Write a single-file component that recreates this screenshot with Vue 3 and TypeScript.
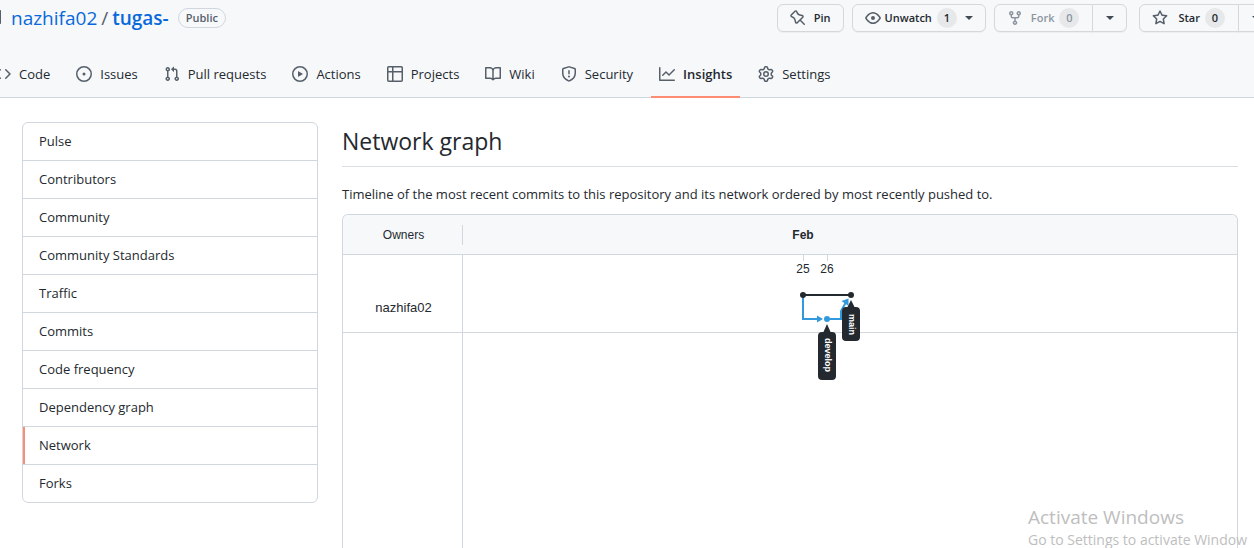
<script setup lang="ts">
interface Tab {
  label: string
  icon: string
  current?: boolean
}

const tabs: Tab[] = [
  { label: 'Code', icon: 'M4.72 3.22a.75.75 0 011.06 1.06L2.06 8l3.72 3.72a.75.75 0 11-1.06 1.06L.47 8.53a.75.75 0 010-1.06l4.25-4.25zm6.56 0a.75.75 0 10-1.06 1.06L13.94 8l-3.72 3.72a.75.75 0 101.06 1.06l4.25-4.25a.75.75 0 000-1.06l-4.25-4.25z' },
  { label: 'Issues', icon: 'M8 9.5a1.5 1.5 0 100-3 1.5 1.5 0 000 3zM8 0a8 8 0 100 16A8 8 0 008 0zM1.5 8a6.5 6.5 0 1113 0 6.5 6.5 0 01-13 0z' },
  { label: 'Pull requests', icon: 'M7.177 3.073L9.573.677A.25.25 0 0110 .854v4.792a.25.25 0 01-.427.177L7.177 3.427a.25.25 0 010-.354zM3.75 2.5a.75.75 0 100 1.5.75.75 0 000-1.5zm-2.25.75a2.25 2.25 0 113 2.122v5.256a2.251 2.251 0 11-1.5 0V5.372A2.25 2.25 0 011.5 3.25zM11 2.5h-1V4h1a1 1 0 011 1v5.628a2.251 2.251 0 101.5 0V5A2.5 2.5 0 0011 2.5zm1 10.25a.75.75 0 111.5 0 .75.75 0 01-1.5 0zM3.75 12a.75.75 0 100 1.5.75.75 0 000-1.5z' },
  { label: 'Actions', icon: 'M1.5 8a6.5 6.5 0 1113 0 6.5 6.5 0 01-13 0zM8 0a8 8 0 100 16A8 8 0 008 0zM6.379 5.227A.25.25 0 006 5.442v5.117a.25.25 0 00.379.214l4.264-2.559a.25.25 0 000-.428L6.379 5.227z' },
  { label: 'Projects', icon: 'M0 1.75C0 .784.784 0 1.75 0h12.5C15.216 0 16 .784 16 1.75v12.5A1.75 1.75 0 0114.25 16H1.75A1.75 1.75 0 010 14.25V1.75zM1.5 6.5v7.75c0 .138.112.25.25.25H5v-8H1.5zM5 5V1.5H1.75a.25.25 0 00-.25.25V5H5zm1.5 1.5v8h7.75a.25.25 0 00.25-.25V6.5h-8zm8-1.5V1.75a.25.25 0 00-.25-.25H6.5V5h8z' },
  { label: 'Wiki', icon: 'M0 1.75A.75.75 0 01.75 1h4.253c1.227 0 2.317.59 3 1.501A3.744 3.744 0 0111.006 1h4.245a.75.75 0 01.75.75v10.5a.75.75 0 01-.75.75h-4.507a2.25 2.25 0 00-1.591.659l-.622.621a.75.75 0 01-1.06 0l-.622-.621A2.25 2.25 0 005.258 13H.75a.75.75 0 01-.75-.75V1.75zm8.755 3a2.25 2.25 0 012.25-2.25H14.5v9h-3.757c-.71 0-1.4.201-1.992.572l.004-7.322zm-1.504 7.324l.004-5.073-.002-2.253A2.25 2.25 0 005.003 2.5H1.5v9h3.757a3.75 3.75 0 011.994.574z' },
  { label: 'Security', icon: 'M7.467.133a1.75 1.75 0 011.066 0l5.25 1.68A1.75 1.75 0 0115 3.48V7c0 1.566-.32 3.182-1.303 4.682-.983 1.498-2.585 2.813-5.032 3.855a1.7 1.7 0 01-1.33 0c-2.447-1.042-4.049-2.357-5.032-3.855C1.32 10.182 1 8.566 1 7V3.48a1.75 1.75 0 011.217-1.667l5.25-1.68zm.61 1.429a.25.25 0 00-.153 0l-5.25 1.68a.25.25 0 00-.174.238V7c0 1.358.275 2.666 1.057 3.86.784 1.194 2.121 2.34 4.366 3.297a.2.2 0 00.154 0c2.245-.956 3.582-2.104 4.366-3.298C13.225 9.666 13.5 8.36 13.5 7V3.48a.25.25 0 00-.174-.237l-5.25-1.68zM9 10.5a1 1 0 11-2 0 1 1 0 012 0zm-.25-5.75a.75.75 0 10-1.5 0v3a.75.75 0 001.5 0v-3z' },
  { label: 'Insights', current: true, icon: 'M1.5 1.75a.75.75 0 00-1.5 0v12.5c0 .414.336.75.75.75h14.5a.75.75 0 000-1.5H1.5V1.75zm14.28 2.53a.75.75 0 00-1.06-1.06L10 7.94 7.53 5.47a.75.75 0 00-1.06 0L3.22 8.72a.75.75 0 001.06 1.06L7 7.06l2.47 2.47a.75.75 0 001.06 0l5.25-5.25z' },
  { label: 'Settings', icon: 'M7.429 1.525a6.593 6.593 0 011.142 0c.036.003.108.036.137.146l.289 1.105c.147.56.55.967.997 1.189.174.086.341.183.501.29.417.278.97.423 1.53.27l1.102-.303c.11-.03.175.016.195.046.219.31.41.641.573.989.014.031.022.11-.059.19l-.815.806c-.411.406-.562.957-.53 1.456a4.588 4.588 0 010 .582c-.032.499.119 1.05.53 1.456l.815.806c.08.08.073.159.059.19a6.494 6.494 0 01-.573.99c-.02.029-.086.074-.195.045l-1.103-.303c-.559-.153-1.112-.008-1.529.27-.16.107-.327.204-.5.29-.449.222-.851.628-.998 1.189l-.289 1.105c-.029.11-.101.143-.137.146a6.613 6.613 0 01-1.142 0c-.036-.003-.108-.037-.137-.146l-.289-1.105c-.147-.56-.55-.967-.997-1.189a4.502 4.502 0 01-.501-.29c-.417-.278-.97-.423-1.53-.27l-1.102.303c-.11.03-.175-.016-.195-.046a6.492 6.492 0 01-.573-.989c-.014-.031-.022-.11.059-.19l.815-.806c.411-.406.562-.957.53-1.456a4.587 4.587 0 010-.582c.032-.499-.119-1.05-.53-1.456l-.815-.806c-.08-.08-.073-.159-.059-.19a6.44 6.44 0 01.573-.99c.02-.029.086-.075.195-.045l1.103.303c.559.153 1.112.008 1.529-.27.16-.107.327-.204.5-.29.449-.222.851-.628.998-1.189l.289-1.105c.029-.11.101-.143.137-.146zM8 0c-.236 0-.47.01-.701.03-.743.065-1.29.615-1.458 1.261l-.29 1.106c-.017.066-.078.158-.211.224a5.994 5.994 0 00-.668.386c-.123.082-.233.09-.3.071L3.27 2.776c-.644-.177-1.392.02-1.82.63a7.977 7.977 0 00-.704 1.217c-.315.675-.111 1.422.363 1.891l.815.806c.05.048.098.147.088.294a6.084 6.084 0 000 .772c.01.147-.038.246-.088.294l-.815.806c-.474.469-.678 1.216-.363 1.891.2.428.436.835.704 1.218.428.609 1.176.806 1.82.63l1.103-.303c.066-.019.176-.011.299.071.213.143.436.272.668.386.133.066.194.158.212.224l.289 1.106c.169.646.715 1.196 1.458 1.26a8.094 8.094 0 001.402 0c.743-.064 1.29-.614 1.458-1.26l.29-1.106c.017-.066.078-.158.211-.224a5.98 5.98 0 00.668-.386c.123-.082.233-.09.3-.071l1.102.302c.644.177 1.392-.02 1.82-.63.268-.382.505-.789.704-1.217.315-.675.111-1.422-.364-1.891l-.814-.806c-.05-.048-.098-.147-.088-.294a6.1 6.1 0 000-.772c-.01-.147.039-.246.088-.294l.814-.806c.475-.469.679-1.216.364-1.891a7.992 7.992 0 00-.704-1.218c-.428-.609-1.176-.806-1.82-.63l-1.103.303c-.066.019-.176.011-.299-.071a5.991 5.991 0 00-.668-.386c-.133-.066-.194-.158-.212-.224L10.16 1.29C9.99.645 9.444.095 8.701.031A8.094 8.094 0 008 0zm1.5 8a1.5 1.5 0 11-3 0 1.5 1.5 0 013 0zM11 8a3 3 0 11-6 0 3 3 0 016 0z' },
]

const views: string[] = [
  'Pulse',
  'Contributors',
  'Community',
  'Community Standards',
  'Traffic',
  'Commits',
  'Code frequency',
  'Dependency graph',
  'Network',
  'Forks',
]
const currentView = 'Network'
</script>

<template>
  <div class="page">
    <header class="head">
      <div class="title-row">
        <h1 class="repo">
          <svg class="repo-icon" width="16" height="16" viewBox="0 0 16 16" aria-hidden="true">
            <path fill-rule="evenodd" d="M2 2.5A2.5 2.5 0 014.5 0h8.75a.75.75 0 01.75.75v12.5a.75.75 0 01-.75.75h-2.5a.75.75 0 110-1.5h1.75v-2h-8a1 1 0 00-.714 1.7.75.75 0 01-1.072 1.05A2.495 2.495 0 012 11.5v-9zm10.5-1V9h-8c-.356 0-.694.074-1 .208V2.5a1 1 0 011-1h8z" />
          </svg>
          <a href="#">nazhifa02</a>
          <span class="slash">/</span>
          <a href="#" class="name">tugas-</a>
          <span class="badge">Public</span>
        </h1>
        <ul class="actions">
          <li>
            <button type="button" class="btn pin">
              <svg width="16" height="16" viewBox="0 0 16 16" aria-hidden="true">
                <path fill-rule="evenodd" d="M4.456.734a1.75 1.75 0 012.826.504l.613 1.327a3.081 3.081 0 002.084 1.707l2.454.584c1.332.317 1.8 1.972.832 2.94L11.06 10l3.72 3.72a.75.75 0 11-1.061 1.06L10 11.06l-2.204 2.205c-.968.968-2.623.5-2.94-.832l-.584-2.454a3.081 3.081 0 00-1.707-2.084l-1.327-.613a1.75 1.75 0 01-.504-2.826L4.456.734zM5.92 1.866a.25.25 0 00-.404-.072L1.794 5.516a.25.25 0 00.072.404l1.328.613A4.582 4.582 0 015.73 9.63l.584 2.454a.25.25 0 00.42.12l5.47-5.47a.25.25 0 00-.12-.42L9.63 5.73a4.581 4.581 0 01-3.098-2.537L5.92 1.866z" />
              </svg>
              Pin
            </button>
          </li>
          <li>
            <button type="button" class="btn watch">
              <svg width="16" height="16" viewBox="0 0 16 16" aria-hidden="true">
                <path fill-rule="evenodd" d="M1.679 7.932c.412-.621 1.242-1.75 2.366-2.717C5.175 4.242 6.527 3.5 8 3.5c1.473 0 2.824.742 3.955 1.715 1.124.967 1.954 2.096 2.366 2.717a.119.119 0 010 .136c-.412.621-1.242 1.75-2.366 2.717C10.825 11.758 9.473 12.5 8 12.5c-1.473 0-2.824-.742-3.955-1.715C2.92 9.818 2.09 8.69 1.679 8.068a.119.119 0 010-.136zM8 2c-1.981 0-3.67.992-4.933 2.078C1.797 5.169.88 6.423.43 7.1a1.619 1.619 0 000 1.798c.45.678 1.367 1.932 2.637 3.024C4.329 13.008 6.019 14 8 14c1.981 0 3.67-.992 4.933-2.078 1.27-1.091 2.187-2.345 2.637-3.023a1.619 1.619 0 000-1.798c-.45-.678-1.367-1.932-2.637-3.023C11.671 2.992 9.981 2 8 2zm0 8a2 2 0 100-4 2 2 0 000 4z" />
              </svg>
              Unwatch
              <span class="count">1</span>
              <span class="caret"></span>
            </button>
          </li>
          <li class="group">
            <button type="button" class="btn fork" disabled>
              <svg width="16" height="16" viewBox="0 0 16 16" aria-hidden="true">
                <path fill-rule="evenodd" d="M5 3.25a.75.75 0 11-1.5 0 .75.75 0 011.5 0zm0 2.122a2.25 2.25 0 10-1.5 0v.878A2.25 2.25 0 005.75 8.5h1.5v2.128a2.251 2.251 0 101.5 0V8.5h1.5a2.25 2.25 0 002.25-2.25v-.878a2.25 2.25 0 10-1.5 0v.878a.75.75 0 01-.75.75h-4.5A.75.75 0 015 6.25v-.878zm3.75 7.378a.75.75 0 11-1.5 0 .75.75 0 011.5 0zm3-8.75a.75.75 0 100-1.5.75.75 0 000 1.5z" />
              </svg>
              Fork
              <span class="count">0</span>
            </button>
            <button type="button" class="btn more" aria-label="See your forks"><span class="caret"></span></button>
          </li>
          <li class="group star-group">
            <button type="button" class="btn star">
              <svg width="16" height="16" viewBox="0 0 16 16" aria-hidden="true">
                <path fill-rule="evenodd" d="M8 .25a.75.75 0 01.673.418l1.882 3.815 4.21.612a.75.75 0 01.416 1.279l-3.046 2.97.719 4.192a.75.75 0 01-1.088.791L8 12.347l-3.766 1.98a.75.75 0 01-1.088-.79l.72-4.194L.818 6.374a.75.75 0 01.416-1.28l4.21-.611L7.327.668A.75.75 0 018 .25zm0 2.445L6.615 5.5a.75.75 0 01-.564.41l-3.097.45 2.24 2.184a.75.75 0 01.216.664l-.528 3.084 2.769-1.456a.75.75 0 01.698 0l2.77 1.456-.53-3.084a.75.75 0 01.216-.664l2.24-2.183-3.096-.45a.75.75 0 01-.564-.41L8 2.694v.001z" />
              </svg>
              Star
              <span class="count">0</span>
            </button>
            <button type="button" class="btn more" aria-label="Add to a list"><span class="caret"></span></button>
          </li>
        </ul>
      </div>
      <nav class="tabs" aria-label="Repository">
        <a v-for="tab in tabs" :key="tab.label" href="#" class="tab" :class="{ current: tab.current }">
          <svg width="16" height="16" viewBox="0 0 16 16" aria-hidden="true">
            <path fill-rule="evenodd" :d="tab.icon" />
          </svg>
          <span>{{ tab.label }}</span>
        </a>
      </nav>
    </header>

    <div class="body">
      <nav class="menu" aria-label="Insights">
        <a v-for="view in views" :key="view" href="#" :class="{ selected: view === currentView }">{{ view }}</a>
      </nav>

      <main class="content">
        <h2>Network graph</h2>
        <p>Timeline of the most recent commits to this repository and its network ordered by most recently pushed to.</p>
        <section class="network">
          <div class="net-head">
            <div class="owners">Owners</div>
            <div class="months"><span class="month">Feb</span></div>
          </div>
          <div class="net-row">
            <div class="owner">nazhifa02</div>
            <div class="lane">
              <svg class="graph" width="100" height="130" viewBox="780 255 100 130" role="img" aria-label="Commits on main and develop">
                <path d="M803.5 255v6M827.5 255v6" stroke="#d0d7de" />
                <text class="day" x="803" y="273">25</text>
                <text class="day" x="827" y="273">26</text>
                <g fill="none" stroke="#3399dd" stroke-width="2">
                  <path d="M803 295V319H818" />
                  <path d="M827 319H841V311L845.500 303" />
                </g>
                <path d="M817 315.500L823 319L817 322.500zM848.500 298.500L841.500 301L848.500 306z" fill="#3399dd" />
                <path d="M803 295H851" stroke="#24292f" stroke-width="2" />
                <circle cx="803" cy="295" r="3" fill="#24292f" />
                <circle cx="851" cy="295" r="3" fill="#24292f" />
                <circle cx="827" cy="319" r="3" fill="#3399dd" />
                <g fill="#24292f">
                  <path d="M851 300L855 308H847z" />
                  <rect x="842" y="307" width="18" height="34" rx="4" />
                  <path d="M827 324L831 333H823z" />
                  <rect x="818" y="332" width="18" height="48" rx="4" />
                </g>
                <text class="ref" transform="translate(849 314) rotate(90)">main</text>
                <text class="ref" transform="translate(825 338) rotate(90)">develop</text>
              </svg>
            </div>
          </div>
          <div class="net-rest">
            <div class="owner"></div>
          </div>
        </section>
      </main>
    </div>

    <aside class="watermark">
      <div class="wm-title">Activate Windows</div>
      <div class="wm-text">Go to Settings to activate Window</div>
    </aside>
  </div>
</template>

<style>
body {
  margin: 0;
  background: #fff;
}
</style>

<style scoped>
.page {
  position: relative;
  display: flex;
  flex-direction: column;
  height: 100vh;
  overflow: hidden;
  font: 13px/20px "Open Sans", "Noto Sans", sans-serif;
  color: #24292f;
}
.page * {
  box-sizing: border-box;
}
a {
  color: inherit;
  text-decoration: none;
}
svg {
  flex: none;
  fill: currentColor;
}
.head {
  flex: none;
  background: #f6f8fa;
  border-bottom: 1px solid #d0d7de;
}
.title-row {
  display: flex;
  justify-content: space-between;
  padding-top: 4px;
  margin: 0 -19px 0 -13px;
}
.repo {
  display: flex;
  align-items: center;
  height: 28px;
  margin: 0;
  font-size: 19px;
  line-height: 28px;
  font-weight: 400;
}
.repo a {
  color: #0969da;
}
.repo .name {
  font-weight: 600;
}
.repo-icon {
  margin-right: 8px;
  color: #57606a;
}
.slash {
  margin: 0 4px;
  color: #57606a;
}
.badge {
  margin-left: 9px;
  padding: 0 7px;
  border: 1px solid #d0d7de;
  border-radius: 10px;
  color: #57606a;
  font-size: 11px;
  line-height: 18px;
  font-weight: 600;
}
.actions {
  display: flex;
  gap: 8px;
  margin: 0;
  padding: 0;
  list-style: none;
}
.group {
  display: flex;
}
.star-group {
  margin-left: 4px;
}
.btn {
  display: flex;
  align-items: center;
  height: 28px;
  padding: 0 12px;
  border: 1px solid #d5d8da;
  border-radius: 6px;
  background: #f6f8fa;
  box-shadow: 0 1px 0 rgba(27, 31, 36, 0.04);
  color: #24292f;
  font: 600 11px/20px "Open Sans", "Noto Sans", sans-serif;
}
.btn svg {
  color: #57606a;
}
.pin svg,
.fork svg {
  margin-right: 8px;
}
.star svg {
  margin-right: 10px;
}
.watch svg {
  margin-right: 4px;
}
.btn:disabled,
.btn:disabled svg,
.btn:disabled .count {
  color: #8c959f;
}
.group .btn:first-child {
  padding-right: 13px;
  border-radius: 6px 0 0 6px;
}
.group .more {
  width: 35px;
  margin-left: -1px;
  justify-content: center;
  border-radius: 0 6px 6px 0;
}
.count {
  width: 20px;
  margin-left: 5px;
  border-radius: 10px;
  background: #e6e8ea;
  text-align: center;
}
.caret {
  border: 4px solid transparent;
  border-top-color: #424a53;
  border-bottom: 0;
}
.watch .caret {
  margin-left: 8px;
}
.tabs {
  display: flex;
  gap: 10px;
  margin: 18px 0 -1px -13px;
}
.tab {
  display: flex;
  align-items: center;
  gap: 8px;
  height: 48px;
  padding: 2px 8px 0;
  border-bottom: 2px solid transparent;
}
.tab svg {
  color: #57606a;
}
.tab.current {
  border-bottom-color: #fd8c73;
  font-weight: 600;
}
.body {
  display: flex;
  flex: 1;
  gap: 24px;
  min-height: 0;
  padding: 24px 16px 0 22px;
}
.menu {
  flex: none;
  align-self: flex-start;
  width: 296px;
  border: 1px solid #d0d7de;
  border-radius: 6px;
  overflow: hidden;
}
.menu a {
  display: block;
  padding-left: 16px;
  border-bottom: 1px solid #d0d7de;
  line-height: 37px;
}
.menu a:last-child {
  border-bottom: 0;
}
.menu .selected {
  box-shadow: inset 2px 0 #fd8c73;
}
.content {
  display: flex;
  flex: 1;
  flex-direction: column;
  min-width: 0;
}
.content h2 {
  margin: 0 0 16px;
  padding-bottom: 6px;
  border-bottom: 1px solid #d8dee4;
  font-size: 23px;
  line-height: 38px;
  font-weight: 400;
}
.content p {
  margin: 0 0 8px;
  line-height: 23px;
}
.network {
  display: flex;
  flex: 1;
  flex-direction: column;
  border: 1px solid #d0d7de;
  border-bottom: 0;
  border-radius: 6px 6px 0 0;
  font-family: "Liberation Sans", Arial, sans-serif;
}
.net-head {
  display: flex;
  align-items: center;
  height: 40px;
  border-bottom: 1px solid #d0d7de;
  border-radius: 6px 6px 0 0;
  background: #f6f8fa;
  font-size: 12px;
  line-height: 20px;
}
.owners {
  flex: none;
  width: 120px;
  padding-left: 2px;
  border-right: 1px solid #d0d7de;
  text-align: center;
}
.months {
  flex: 1;
  padding-left: 316px;
  font-weight: 700;
}
.month {
  display: block;
  width: 48px;
  text-align: center;
}
.net-row {
  display: flex;
  height: 78px;
  border-bottom: 1px solid #d0d7de;
}
.owner {
  flex: none;
  width: 120px;
  padding: 28px 0 0 2px;
  border-right: 1px solid #d0d7de;
  font-size: 13px;
  line-height: 50px;
  text-align: center;
}
.lane {
  flex: 1;
  padding-left: 317px;
}
.graph {
  display: block;
  position: relative;
  overflow: visible;
}
.day {
  font-size: 12px;
  text-anchor: middle;
}
.ref {
  fill: #fff;
  font-size: 9px;
  font-weight: 700;
}
.net-rest {
  display: flex;
  flex: 1;
}
.watermark {
  position: absolute;
  right: 0;
  bottom: -2px;
  width: 226px;
  color: #bebebe;
  white-space: nowrap;
  pointer-events: none;
}
.wm-title {
  font-size: 19px;
  line-height: 26px;
}
.wm-text {
  font-size: 14px;
  line-height: 20px;
}
</style>
